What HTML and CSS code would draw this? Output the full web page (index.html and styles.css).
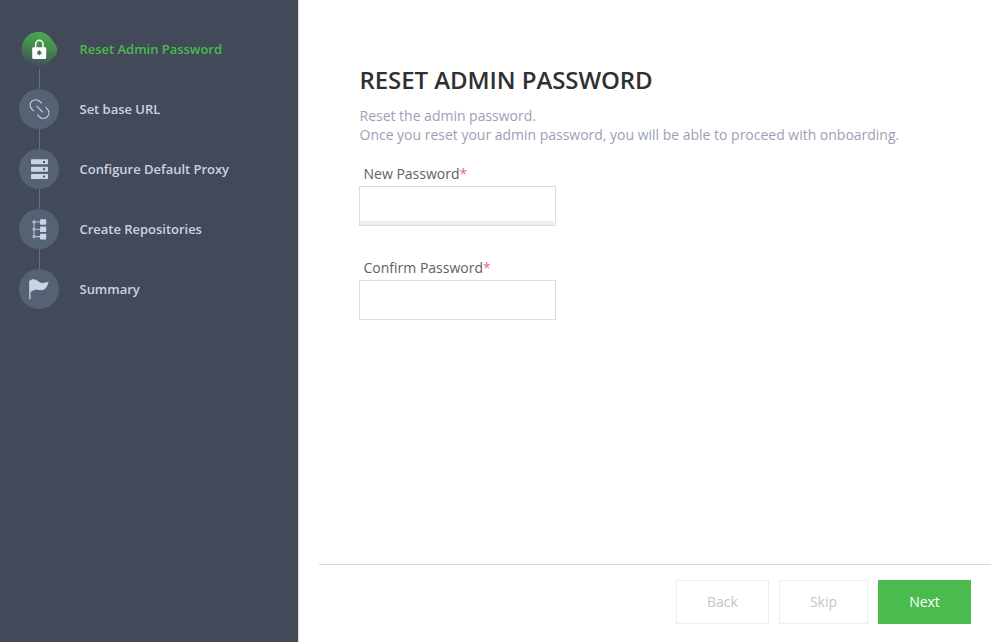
FILE: index.html
```html
<!DOCTYPE html>
<html lang="en">
<head>
<meta charset="utf-8">
<title>Reset Admin Password</title>
<link rel="stylesheet" href="styles.css">
</head>
<body>
<div class="wizard">
  <nav class="sidebar">
    <ol class="steps">
      <li class="step active">
        <svg class="icon" viewBox="0 0 40 40">
          <defs><linearGradient id="blob" x1="0.62" y1="0" x2="0.38" y2="1"><stop offset="0.1" stop-color="#48a64e"/><stop offset="0.45" stop-color="#45884f"/><stop offset="1" stop-color="#424959"/></linearGradient></defs>
          <path d="M18.5 3C25 2.5 29 5 32 9.5C35 13.5 38.3 17 38.3 21C38.3 25 35 28 31.5 31.5C27 35.5 23 38 18.5 38C9 38 2.7 30 2.7 21C2.7 11 9 3.5 18.5 3Z" fill="url(#blob)"/>
          <path d="M16.7 19V15.2a3.65 3.9 0 0 1 7.3 0V19" fill="none" stroke="#fff" stroke-width="1.5"/>
          <rect x="13.2" y="18.2" width="14" height="11.8" rx="1.2" fill="#fff"/>
          <path d="M20.3 21.2v5M18.1 22.4l4.4 2.6M22.5 22.4l-4.4 2.6" stroke="#3d6652" stroke-width="1.2"/>
        </svg>
        <span>Reset Admin Password</span>
      </li>
      <li class="step">
        <svg class="icon" viewBox="0 0 40 40">
          <circle cx="20" cy="20" r="20" fill="#556273"/>
          <path d="M14.8 22.1L13.1 20.4C10.5 17.8 10.5 14.5 12.7 12.4C14.9 10.2 18.2 10.3 20.5 12.3L22.6 14.4M26.6 18.2L28.2 19.8C30.4 22.1 30.5 25.5 28.3 27.8C26 30 22.6 29.9 20.3 27.7L18.3 25.7M17.5 16.9L23.9 23.3" fill="none" stroke="#c5cde0" stroke-width="1.2"/>
        </svg>
        <span>Set base URL</span>
      </li>
      <li class="step">
        <svg class="icon" viewBox="0 0 40 40">
          <circle cx="20" cy="20" r="20" fill="#556273"/>
          <g fill="#ccd3e5"><rect x="12" y="10.3" width="17" height="5" rx=".8"/><rect x="12" y="17.7" width="17" height="5" rx=".8"/><rect x="12" y="25" width="17" height="5" rx=".8"/></g>
          <g fill="#4b586b"><rect x="24" y="12" width="2" height="2"/><rect x="24" y="19.2" width="2" height="2"/><rect x="24" y="26.5" width="2" height="2"/></g>
        </svg>
        <span>Configure Default Proxy</span>
      </li>
      <li class="step">
        <svg class="icon" viewBox="0 0 40 40">
          <circle cx="20" cy="20" r="20" fill="#556273"/>
          <path d="M15 14v12.5M16 13h5M16 20.3h5M16 27.6h5" stroke="#b7c0d3" stroke-width="1.1"/>
          <g fill="#7b879a" stroke="#c5cde0" stroke-width="1"><circle cx="15" cy="13" r="1.2"/><circle cx="15" cy="20.3" r="1.2"/><circle cx="15" cy="27.6" r="1.2"/></g>
          <g fill="#ccd3e5"><rect x="21" y="10.2" width="6.2" height="5.6" rx=".7"/><rect x="21" y="17.5" width="6.2" height="5.6" rx=".7"/><rect x="21" y="24.8" width="6.2" height="5.6" rx=".7"/></g>
        </svg>
        <span>Create Repositories</span>
      </li>
      <li class="step">
        <svg class="icon" viewBox="0 0 40 40">
          <circle cx="20" cy="20" r="20" fill="#556273"/>
          <path d="M10.2 12C13 9.4 16.7 9.7 19.2 12.2C22 14.9 25.5 14 29.6 12.8C28.6 16.5 27.2 20.2 24 21C20.5 21.8 16.5 18.5 11.5 23.3V30.3H10.2Z" fill="#ccd3e5"/>
        </svg>
        <span>Summary</span>
      </li>
    </ol>
  </nav>
  <main class="main">
    <section class="content">
      <h1>RESET ADMIN PASSWORD</h1>
      <p>Reset the admin password.<br>Once you reset your admin password, you will be able to proceed with onboarding.</p>
      <form>
        <label class="field"><span>New Password<b>*</b></span><input class="strength" type="password"></label>
        <label class="field"><span>Confirm Password<b>*</b></span><input type="password"></label>
      </form>
    </section>
    <footer class="footer">
      <button class="button back">Back</button>
      <button class="button skip">Skip</button>
      <button class="button next">Next</button>
    </footer>
  </main>
</div>
</body>
</html>
```

FILE: styles.css
```css
* { box-sizing: border-box; }

body {
  margin: 0;
  background: #fff;
  font: 14px/19px "Open Sans", sans-serif;
  -webkit-font-smoothing: antialiased;
}

.wizard { display: flex; height: 642px; }

.sidebar {
  width: 299px;
  flex: none;
  padding: 29px 19px;
  background: #424959;
  border-right: 1px solid #d8d9dc;
}

.steps { margin: 0; padding: 0; list-style: none; }

.step {
  display: grid;
  grid-template-columns: 40px 1fr;
  column-gap: 20.5px;
  align-items: center;
  grid-template-rows: 40px 20px;
  color: #ccd2e2;
  font-size: 13px;
  font-weight: 600;
  letter-spacing: -.02px;
}

.step:not(:last-child)::after {
  content: "";
  grid-row: 2;
  width: 1px;
  height: 20px;
  margin-left: 20px;
  background: #647084;
}

.icon { display: block; width: 40px; height: 40px; }

.active { color: #49bc4d; }

.main {
  flex: 1;
  display: flex;
  flex-direction: column;
  padding: 0 14px 0 20px;
}

.content { flex: 1; padding: 63px 0 0 40px; }

h1 {
  margin: 0 0 9px .5px;
  color: #303030;
  font-size: 24px;
  line-height: 34px;
  font-weight: 600;
  letter-spacing: -.07px;
}

p { margin: 0 0 20px .5px; color: #9b9fb5; letter-spacing: -.012px; }

.field { display: block; width: 197px; margin-bottom: 32px; color: #5e6066; }

.field span { display: block; height: 22px; padding-left: 4.5px; }

.field b { color: #f16b6b; font-weight: 400; }

input {
  display: block;
  width: 197px;
  height: 40px;
  border: 1px solid #dadce4;
  border-radius: 0;
  background: #fff;
}

.strength { background: linear-gradient(#ededed, #ededed) 0 100% / 194px 4px no-repeat #fff; }

.footer {
  display: flex;
  justify-content: flex-end;
  gap: 10px;
  height: 78px;
  padding: 15px 20px 0 0;
  border-top: 1px solid #d8d9da;
}

.button {
  width: 93px;
  height: 44px;
  padding: 0 0 2px;
  border: 1px solid #ebeef7;
  background: #fff;
  color: #c4c6cc;
  font: 14px/19px "Open Sans", sans-serif;
}

.skip { width: 89px; }

.next { border-color: #49bc4d; background: #49bc4d; color: #fff; }
```
